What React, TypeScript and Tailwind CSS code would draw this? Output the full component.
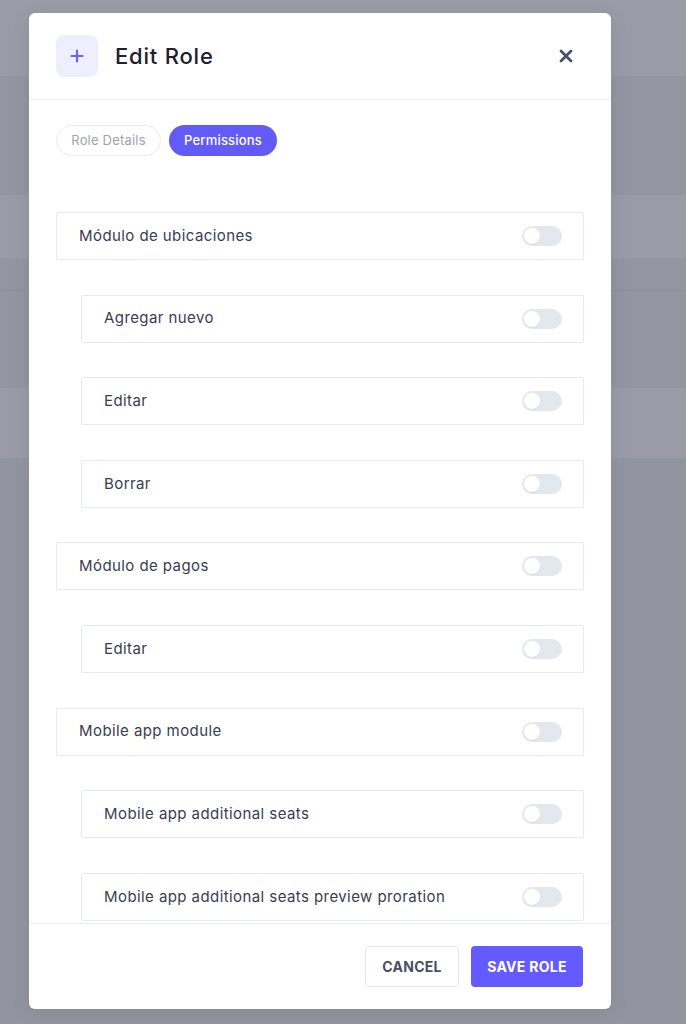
import React from "react";

const font = { fontFamily: "Inter, 'Noto Sans', sans-serif" };

function Toggle() {
  return (
    <div className="w-[40px] h-[20px] rounded-full bg-[#e3e7ee] flex items-center px-[2px] shrink-0">
      <div className="w-[16px] h-[16px] rounded-full bg-white shadow-[0_1px_1px_rgba(0,0,0,0.06)]" />
    </div>
  );
}

function Row({ label, sub }: { label: string; sub?: boolean }) {
  return (
    <div
      className={`h-[48px] border border-[#e6ebf3] rounded-[2px] flex items-center justify-between pl-[22px] pr-[21px] bg-white ${
        sub ? "ml-[25px]" : ""
      }`}
    >
      <span className="text-[15px] text-[#383d52] tracking-[0.42px]">{label}</span>
      <Toggle />
    </div>
  );
}

export default function App() {
  const rows: { label: string; sub?: boolean }[] = [
    { label: "Módulo de ubicaciones" },
    { label: "Agregar nuevo", sub: true },
    { label: "Editar", sub: true },
    { label: "Borrar", sub: true },
    { label: "Módulo de pagos" },
    { label: "Editar", sub: true },
    { label: "Mobile app module" },
    { label: "Mobile app additional seats", sub: true },
    { label: "Mobile app additional seats preview proration", sub: true },
  ];
  return (
    <div className="relative w-full h-[1024px] overflow-hidden" style={font}>
      <div className="flex flex-col h-full">
        <div className="h-[76px] bg-[#9a9ba6]" />
        <div className="h-[119px] bg-[#9495a1]" />
        <div className="h-[63px] bg-[#9a9ba6]" />
        <div className="h-[32px] bg-[#9495a1]" />
        <div className="h-[1px] bg-[#8d8f9b]" />
        <div className="h-[97px] bg-[#9495a1]" />
        <div className="h-[70px] bg-[#9a9ba6]" />
        <div className="flex-1 bg-[#9294a0]" />
      </div>

      <div className="absolute left-[29px] top-[13px] w-[582px] h-[996px] bg-white rounded-[6px] flex flex-col overflow-hidden shadow-[0_4px_20px_rgba(0,0,0,0.08)]">
        <div className="h-[87px] border-b border-[#e8ecf2] flex items-center px-[27px] shrink-0">
          <div className="w-[42px] h-[42px] rounded-[8px] bg-[#efeefe] flex items-center justify-center">
            <svg width="14" height="14" viewBox="0 0 14 14">
              <path d="M7 1.5v11M1.5 7h11" stroke="#6c63f5" strokeWidth="2.2" strokeLinecap="round" />
            </svg>
          </div>
          <h1 className="ml-[17px] text-[22px] font-medium text-[#1d2033] tracking-[0.8px]">Edit Role</h1>
          <button className="ml-auto mr-[8px] w-[20px] h-[20px] flex items-center justify-center">
            <svg width="14" height="14" viewBox="0 0 14 14">
              <path d="M2 2l10 10M12 2L2 12" stroke="#4a4f63" strokeWidth="2.8" strokeLinecap="round" />
            </svg>
          </button>
        </div>

        <div className="flex-1 overflow-hidden pl-[27px] pr-[27px] pt-[25px]">
          <div className="flex gap-[8px]">
            <div className="h-[31px] w-[105px] rounded-full border border-[#eaecf0] flex items-center justify-center text-[13px] text-[#9ea3b0] tracking-[0.2px]">
              Role Details
            </div>
            <div className="h-[31px] w-[108px] rounded-full bg-[#625bf6] flex items-center justify-center text-[13px] font-medium text-white tracking-[0.2px]">
              Permissions
            </div>
          </div>
          <div className="mt-[56px] flex flex-col gap-[34.6px]">
            {rows.map((r, i) => (
              <Row key={i} label={r.label} sub={r.sub} />
            ))}
          </div>
        </div>

        <div className="h-[86px] border-t border-[#e8ecf2] flex items-start justify-end gap-[12px] pr-[28px] pt-[22px] shrink-0">
          <button className="h-[41px] w-[94px] border border-[#e3e6ec] rounded-[4px] text-[14px] font-bold text-[#4a4f63] tracking-[0.3px]">
            CANCEL
          </button>
          <button className="h-[41px] w-[112px] rounded-[4px] bg-[#635bff] text-[14px] font-bold text-white tracking-[0.3px]">
            SAVE ROLE
          </button>
        </div>
      </div>
    </div>
  );
}
